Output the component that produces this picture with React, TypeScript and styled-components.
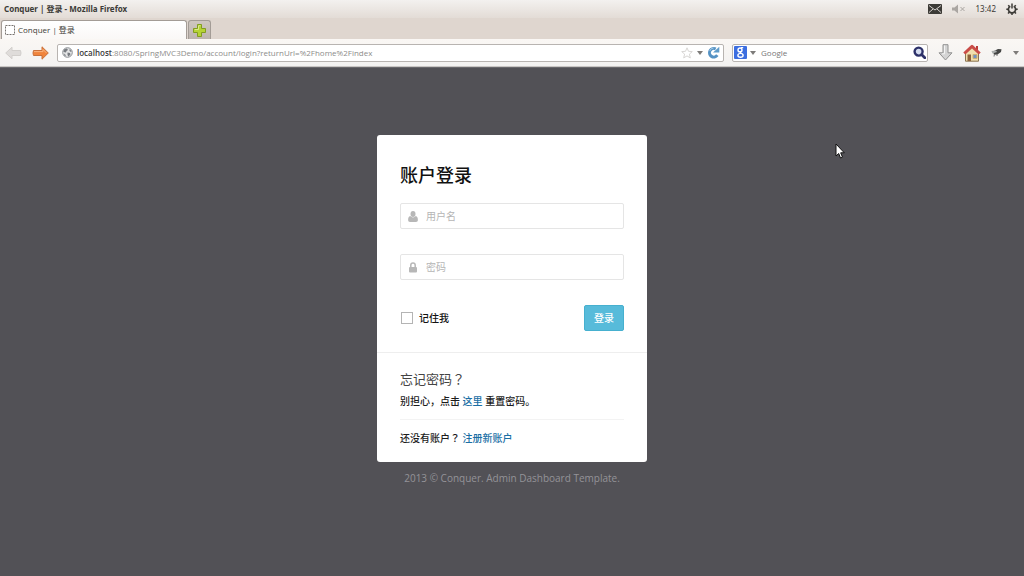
import React from "react";
import styled, { createGlobalStyle } from "styled-components";

const GlobalStyle = createGlobalStyle`
  *, *::before, *::after { box-sizing: border-box; }
  html, body { margin: 0; background: #525156; }
  body, button, input {
    font-family: "Open Sans", "Noto Sans CJK SC", sans-serif;
  }
  button { border: 0; padding: 0; background: none; cursor: pointer; }
  svg { display: block; flex: none; }
`;

const Desktop = styled.div`
  position: relative;
  display: flex;
  flex-direction: column;
  min-height: 100vh;
`;

const TitleBar = styled.header`
  display: flex;
  align-items: center;
  justify-content: space-between;
  height: 18px;
  padding: 0 6px 0 4px;
  background: linear-gradient(#f3f1ef, #e3dcd6);
`;

const WindowTitle = styled.h1`
  margin: 0;
  font: bold 8px/18px "Noto Sans", "Noto Sans CJK SC", sans-serif;
  color: #3c3b37;
`;

const Indicators = styled.div`
  display: flex;
  align-items: center;
  gap: 10px;
  font: 8px/18px "Noto Sans", sans-serif;
  color: #3c3b37;
`;

const TabStrip = styled.div`
  display: flex;
  align-items: flex-end;
  gap: 1px;
  height: 21px;
  padding-left: 1px;
  background: #dfd6cf;
`;

const Tab = styled.button`
  display: flex;
  align-items: center;
  gap: 3px;
  width: 186px;
  height: 19px;
  padding: 0 3px;
  border: 1px solid #a39c96;
  border-bottom: 0;
  border-radius: 3px 3px 0 0;
  background: linear-gradient(#ffffff, #faf8f6);
  font: 8px/18px "Open Sans", "Noto Sans CJK SC", sans-serif;
  color: #3c3b37;
`;

const NewTab = styled.button`
  display: flex;
  align-items: center;
  justify-content: center;
  width: 23px;
  height: 19px;
  border: 1px solid #a39c96;
  border-bottom: 0;
  border-radius: 3px 3px 0 0;
  background: linear-gradient(#cfc7c1, #bdb4ae);
`;

const NavBar = styled.nav`
  display: flex;
  align-items: center;
  height: 28px;
  padding: 0 5px;
  border-bottom: 1px solid #c9c6c4;
  background: linear-gradient(#faf7f4, #f3f2f1);
`;

const NavButton = styled.button<{ $gap: number }>`
  margin-right: ${(p) => p.$gap}px;
`;

const Field = styled.div`
  display: flex;
  align-items: center;
  height: 18px;
  padding: 0 3px 0 4px;
  gap: 4px;
  border: 1px solid #b8b4b1;
  border-radius: 2px;
  background: #fff;
`;

const AddressField = styled(Field)`
  flex: 1;
  min-width: 0;
  margin-right: 8px;
`;

const SearchField = styled(Field)`
  width: 196px;
  padding: 0 1px;
  gap: 3px;
  margin-right: 10px;
`;

const Address = styled.div`
  flex: 1;
  overflow: hidden;
  white-space: nowrap;
  font: 8px/16px "Open Sans", sans-serif;
  color: #8d8c8a;

  strong {
    font-weight: 600;
    color: #3b3b3b;
  }
`;

const SearchInput = styled.input`
  flex: 1;
  min-width: 0;
  padding: 0 2px;
  border: 0;
  outline: 0;
  background: transparent;
  font: 8px/16px "Open Sans", sans-serif;

  &::placeholder { color: #777; opacity: 1; }
`;

const Page = styled.main`
  display: flex;
  flex: 1;
  flex-direction: column;
  align-items: center;
  padding: 67px 16px 16px;
  border-top: 1px solid #69686c;
  background: #525156;
`;

const Card = styled.section`
  width: 100%;
  max-width: 270px;
  border-radius: 3px;
  background: #fff;
`;

const LoginForm = styled.form`
  display: flex;
  flex-direction: column;
  padding: 26px 23px 21px;
  border-bottom: 1px solid #eee;
`;

const FormTitle = styled.h2`
  margin: 0 0 14px;
  font-size: 18px;
  line-height: 28px;
  font-weight: 500;
  color: #111;
`;

const InputBox = styled.label`
  display: flex;
  align-items: center;
  gap: 8px;
  height: 26px;
  margin-bottom: 25px;
  padding: 0 7px;
  border: 1px solid #e5e5e5;
  border-radius: 2px;
`;

const TextInput = styled.input`
  flex: 1;
  min-width: 0;
  padding: 0;
  border: 0;
  outline: 0;
  font-size: 10px;
  line-height: 16px;
  color: #333;

  &::placeholder { color: #b5b5b5; opacity: 1; }
`;

const Actions = styled.div`
  display: flex;
  align-items: center;
  justify-content: space-between;
`;

const Remember = styled.label`
  display: flex;
  align-items: center;
  gap: 6px;
  padding-left: 1px;
  font-size: 10px;
  line-height: 16px;
  font-weight: 500;
  color: #111;
`;

const Checkbox = styled.input`
  appearance: none;
  width: 12px;
  height: 12px;
  margin: 0;
  border: 1px solid #b4b4b4;
  background: #fff;

  &:checked { background: #5bc0de; }
`;

const SubmitButton = styled.button`
  height: 26px;
  padding: 0 9px;
  border: 1px solid #46b0cf;
  border-radius: 2px;
  background: #57bbda;
  font-size: 10px;
  line-height: 16px;
  font-weight: 500;
  color: #fff;
`;

const Help = styled.div`
  padding: 16px 23px;
`;

const HelpTitle = styled.h3`
  margin: 0 0 4px;
  font-size: 13px;
  line-height: 20px;
  font-weight: 400;
  color: #444;
`;

const HelpText = styled.p`
  margin: 0;
  font-size: 10px;
  line-height: 16px;
  font-weight: 500;
  color: #1c1c1c;
`;

const QuestionMark = styled.span`
  font-family: "Noto Sans CJK TC", sans-serif;
  line-height: 1;
`;

const Rule = styled.hr`
  margin: 10px 0;
  border: 0;
  border-top: 1px solid #f3f3f3;
`;

const TextLink = styled.a`
  color: #1a6fa5;
  text-decoration: none;
`;

const Copyright = styled.footer`
  margin-top: 8px;
  font-size: 10px;
  line-height: 16px;
  color: #949398;
`;

const Pointer = styled.svg`
  position: absolute;
  top: 143px;
  left: 835px;
  pointer-events: none;
`;

const MailIcon = () => (
  <svg width="14" height="10" viewBox="0 0 14 10">
    <rect width="14" height="10" rx="1" fill="#3c3b37" />
    <path d="M1 1.500 7 6l6-4.500M1 8.500l4-3.500M13 8.500l-4-3.500" fill="none" stroke="#d8d4d0" />
  </svg>
);

const VolumeIcon = () => (
  <svg width="14" height="10" viewBox="0 0 14 10">
    <path d="M0 3.500h2.500L6 0.500v9L2.500 6.500H0z" fill="#aaa6a2" />
    <path d="m8.500 3 4 4m0-4-4 4" stroke="#aaa6a2" fill="none" />
  </svg>
);

const PowerIcon = () => (
  <svg width="12" height="12" viewBox="0 0 12 12" fill="none" stroke="#3c3b37">
    <path d="M4.300 3.200a3.600 3.600 0 1 0 3.400 0" strokeWidth="1.700" />
    <path d="M6 .5v5" strokeWidth="1.500" />
    <path d="M2.200 2.200 3.200 3.200M9.800 2.200l-1 1M.3 6.300h1.800M9.900 6.300h1.800M2 10.500l1.200-1.200M10 10.500 8.800 9.300M6 10v2" strokeWidth="1.500" />
  </svg>
);

const BlankPageIcon = () => (
  <svg width="10" height="10" viewBox="0 0 10 10">
    <rect x=".5" y=".5" width="9" height="9" fill="#fff" stroke="#77736f" strokeDasharray="2 1" />
  </svg>
);

const PlusIcon = () => (
  <svg width="13" height="13" viewBox="0 0 13 13">
    <path d="M4.500.5h4v4h4v4h-4v4h-4v-4h-4v-4h4z" fill="#b6d335" stroke="#829d20" strokeLinejoin="round" />
    <path d="M5.500 1.700h2M1.700 5.500h3.800V2" fill="none" stroke="#dcea8b" />
  </svg>
);

const ArrowIcon = ({ back = false }: { back?: boolean }) => (
  <svg width="17" height="14" viewBox="0 0 17 14">
    <path
      d={back ? "M.7 7 7 1.200v3.300h8.500q1 2.500 0 5H7v3.300z" : "M16.300 7 10 .8v3.700H1.500q-1 2.500 0 5H10v3.700z"}
      fill={back ? "#dfdcda" : "#f0843c"}
      stroke={back ? "#d2cfcc" : "#c9713b"}
      strokeLinejoin="round"
    />
    {!back && <path d="M2 5.600h9V3.500L14.500 7" fill="none" stroke="#f8b37f" />}
  </svg>
);

const GlobeIcon = () => (
  <svg width="11" height="11" viewBox="0 0 11 11">
    <circle cx="5.500" cy="5.500" r="4.800" fill="#e4e5e6" stroke="#8b8f93" />
    <path d="M2 2.500 5 1.500l1 1.500-1.500 1-.5 1.500-2.500-.5zM5.500 5.500l2.500.5.500 1.500L6.500 9.500l-1-1.500zM7.500 2l2 2-.5 1-1.500-1zM2 6.500l1.500 1.200.3 1.500L2.400 8.500z" fill="#777b80" />
  </svg>
);

const StarIcon = () => (
  <svg width="12" height="12" viewBox="0 0 12 12">
    <path d="m6 .8 1.500 3.500 3.800.3-2.900 2.500.9 3.800L6 8.900l-3.300 2 .9-3.800L.7 4.600l3.800-.3z" fill="#fff" stroke="#d8d6d4" strokeLinejoin="round" />
  </svg>
);

const CaretIcon = () => (
  <svg width="6" height="4" viewBox="0 0 6 4">
    <path d="M0 0h6L3 4z" fill="#7d7b79" />
  </svg>
);

const ReloadIcon = () => (
  <svg width="13" height="13" viewBox="0 0 13 13">
    <path d="M10.300 9.200A4.300 4.300 0 1 1 8.700 2.900" fill="none" stroke="#5592c4" strokeWidth="3" />
    <path d="M6 6.500h6.300V.8z" fill="#5e9bc9" />
    <path d="M2.700 5A4.300 4.300 0 0 1 6.500 2" fill="none" stroke="#a5cde9" />
  </svg>
);

const SearchEngineIcon = () => (
  <svg width="13" height="13" viewBox="0 0 13 13">
    <rect width="13" height="13" rx="1" fill="#3c6ee0" />
    <g fill="none" stroke="#fff" strokeWidth="1.400">
      <ellipse cx="6" cy="3.900" rx="2" ry="1.900" />
      <path d="M7 1.600h2.200M7.200 5.400Q5.400 6.200 7 7" />
      <ellipse cx="6.500" cy="9.300" rx="2.600" ry="1.900" />
    </g>
  </svg>
);

const MagnifierIcon = () => (
  <svg width="13" height="13" viewBox="0 0 13 13" fill="none" stroke="#2d3169">
    <circle cx="5.600" cy="5.600" r="4" fill="#d5ddf0" strokeWidth="2.400" />
    <path d="m8.800 8.800 3 3" strokeWidth="2.800" strokeLinecap="round" />
  </svg>
);

const DownloadIcon = () => (
  <svg width="15" height="17" viewBox="0 0 15 17">
    <path d="M5 .7h5v8.100h4L7.500 16 1 8.800h4z" fill="#d4d4d4" stroke="#929292" strokeLinejoin="round" />
    <path d="M6.500 1.500v8.300H4" fill="none" stroke="#f4f4f4" />
  </svg>
);

const HomeIcon = () => (
  <svg width="18" height="18" viewBox="0 0 18 18">
    <path d="M2.500 8.500 9 3l6.500 5.500v8.700h-13z" fill="#f0dfae" stroke="#8b7552" />
    <path d="M13 2h2v4h-2z" fill="#b93b36" />
    <path d="M1.300 9.500 9 2.300l7.700 7.200" fill="none" stroke="#c94c47" strokeWidth="3" strokeLinejoin="round" />
    <path d="M4.500 10.500H8V17H4.500z" fill="#8e623b" />
    <path d="M10 10.500h4v4h-4z" fill="#7192c4" stroke="#cdb273" />
  </svg>
);

const FlyIcon = () => (
  <svg width="11" height="10" viewBox="0 0 11 10">
    <path d="M2 3.500 7 1l3.500.3-.5 2.700-3.500 2.400-3.500.3z" fill="#444544" />
    <path d="m.5 3 4.500-.5 1 1.500L1.500 5.500z" fill="#a9adac" />
    <path d="M3.500 6 3 8.500M6 6v2" stroke="#777" fill="none" />
  </svg>
);

const UserIcon = () => (
  <svg width="10" height="11" viewBox="0 0 10 11" fill="#b7b7b7">
    <ellipse cx="5" cy="3" rx="2.500" ry="2.900" />
    <path d="M2.200 5Q5 7.800 7.800 5 9.900 5.600 9.900 9.200 9.900 11 8 11H2Q.1 11 .1 9.200.1 5.600 2.200 5z" />
  </svg>
);

const LockIcon = () => (
  <svg width="10" height="11" viewBox="0 0 10 11">
    <path d="M2.800 5.500V3.300a2.200 2.200 0 0 1 4.400 0v2.200" fill="none" stroke="#b7b7b7" strokeWidth="1.500" />
    <rect x="1" y="5" width="8" height="5.500" rx="1" fill="#b7b7b7" />
  </svg>
);

export default function App() {
  return (
    <Desktop>
      <GlobalStyle />
      <TitleBar>
        <WindowTitle>Conquer | 登录 - Mozilla Firefox</WindowTitle>
        <Indicators>
          <MailIcon />
          <VolumeIcon />
          <span>13:42</span>
          <PowerIcon />
        </Indicators>
      </TitleBar>
      <TabStrip>
        <Tab type="button"><BlankPageIcon />Conquer | 登录</Tab>
        <NewTab type="button" aria-label="New tab"><PlusIcon /></NewTab>
      </TabStrip>
      <NavBar>
        <NavButton type="button" aria-label="Back" $gap={10}><ArrowIcon back /></NavButton>
        <NavButton type="button" aria-label="Forward" $gap={8}><ArrowIcon /></NavButton>
        <AddressField>
          <GlobeIcon />
          <Address>
            <strong>localhost</strong>:8080/SpringMVC3Demo/account/login?returnUrl=%2Fhome%2Findex
          </Address>
          <StarIcon />
          <CaretIcon />
          <NavButton type="button" aria-label="Reload" $gap={0}><ReloadIcon /></NavButton>
        </AddressField>
        <SearchField>
          <SearchEngineIcon />
          <CaretIcon />
          <SearchInput type="text" placeholder="Google" aria-label="Search" />
          <NavButton type="button" aria-label="Go" $gap={0}><MagnifierIcon /></NavButton>
        </SearchField>
        <NavButton type="button" aria-label="Downloads" $gap={10}><DownloadIcon /></NavButton>
        <NavButton type="button" aria-label="Home" $gap={10}><HomeIcon /></NavButton>
        <NavButton type="button" aria-label="Firebug" $gap={11}><FlyIcon /></NavButton>
        <NavButton type="button" aria-label="More" $gap={0}><CaretIcon /></NavButton>
      </NavBar>
      <Page>
        <Card>
          <LoginForm onSubmit={(e: React.FormEvent) => e.preventDefault()}>
            <FormTitle>账户登录</FormTitle>
            <InputBox>
              <UserIcon />
              <TextInput type="text" placeholder="用户名" aria-label="用户名" />
            </InputBox>
            <InputBox>
              <LockIcon />
              <TextInput type="password" placeholder="密码" aria-label="密码" />
            </InputBox>
            <Actions>
              <Remember><Checkbox type="checkbox" />记住我</Remember>
              <SubmitButton type="submit">登录</SubmitButton>
            </Actions>
          </LoginForm>
          <Help>
            <HelpTitle>忘记密码<QuestionMark>？</QuestionMark></HelpTitle>
            <HelpText>别担心，点击 <TextLink href="#reset">这里</TextLink> 重置密码。</HelpText>
            <Rule />
            <HelpText>还没有账户<QuestionMark>？</QuestionMark> <TextLink href="#register">注册新账户</TextLink></HelpText>
          </Help>
        </Card>
        <Copyright>2013 © Conquer. Admin Dashboard Template.</Copyright>
      </Page>
      <Pointer width="10" height="16" viewBox="0 0 10 16">
        <path d="M1 1v12l2.700-2.500L5.500 15l2-.8-1.800-4.400H9.300z" fill="#fff" stroke="#111" />
      </Pointer>
    </Desktop>
  );
}
